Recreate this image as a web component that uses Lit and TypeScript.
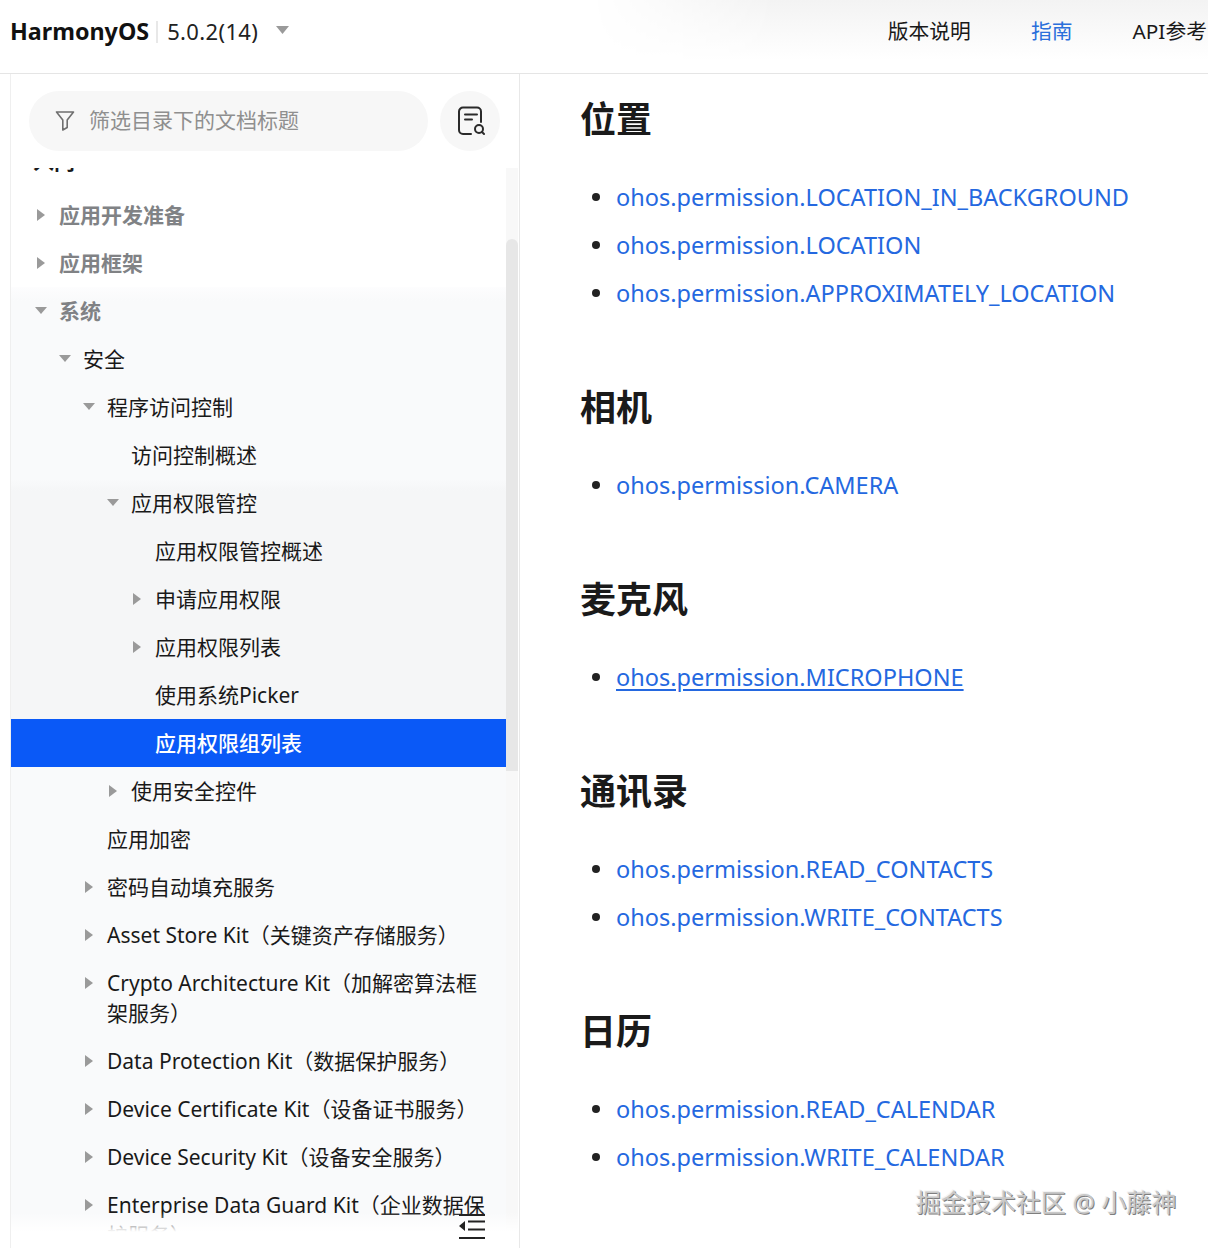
import { LitElement, html, css, svg } from "lit";
import { customElement } from "lit/decorators.js";

type Row = { t: string; l: number; a?: "r" | "d"; b?: boolean; sel?: boolean };

const top: Row[] = [
  { t: "应用开发准备", l: 0, a: "r", b: true },
  { t: "应用框架", l: 0, a: "r", b: true },
];
const g1a: Row[] = [
  { t: "系统", l: 0, a: "d", b: true },
  { t: "安全", l: 1, a: "d" },
  { t: "程序访问控制", l: 2, a: "d" },
  { t: "访问控制概述", l: 3 },
];
const g2: Row[] = [
  { t: "应用权限管控", l: 3, a: "d" },
  { t: "应用权限管控概述", l: 4 },
  { t: "申请应用权限", l: 4, a: "r" },
  { t: "应用权限列表", l: 4, a: "r" },
  { t: "使用系统Picker", l: 4 },
];
const sel: Row = { t: "应用权限组列表", l: 4, sel: true };
const g1b: Row[] = [
  { t: "使用安全控件", l: 3, a: "r" },
  { t: "应用加密", l: 2 },
  { t: "密码自动填充服务", l: 2, a: "r" },
  { t: "Asset Store Kit（关键资产存储服务）", l: 2, a: "r" },
  { t: "Crypto Architecture Kit（加解密算法框架服务）", l: 2, a: "r" },
  { t: "Data Protection Kit（数据保护服务）", l: 2, a: "r" },
  { t: "Device Certificate Kit（设备证书服务）", l: 2, a: "r" },
  { t: "Device Security Kit（设备安全服务）", l: 2, a: "r" },
  { t: "Enterprise Data Guard Kit（企业数据保护服务）", l: 2, a: "r" },
];

const sections: { h: string; items: string[]; u?: boolean }[] = [
  { h: "位置", items: ["ohos.permission.LOCATION_IN_BACKGROUND", "ohos.permission.LOCATION", "ohos.permission.APPROXIMATELY_LOCATION"] },
  { h: "相机", items: ["ohos.permission.CAMERA"] },
  { h: "麦克风", items: ["ohos.permission.MICROPHONE"], u: true },
  { h: "通讯录", items: ["ohos.permission.READ_CONTACTS", "ohos.permission.WRITE_CONTACTS"] },
  { h: "日历", items: ["ohos.permission.READ_CALENDAR", "ohos.permission.WRITE_CALENDAR"] },
];

const arrow = (a?: "r" | "d") =>
  a === "r"
    ? svg`<svg class="arr" width="24" height="14" viewBox="0 0 24 14"><polygon points="2,1 10,7 2,13" fill="#9a9a9a"/></svg>`
    : a === "d"
    ? svg`<svg class="arr" width="24" height="14" viewBox="0 0 24 14"><polygon points="0,3 12,3 6,10" fill="#9a9a9a"/></svg>`
    : html`<span class="arr-sp"></span>`;

@customElement("app-root")
export class AppRoot extends LitElement {
  static styles = css`
    :host {
      display: block;
      width: 1208px;
      height: 1248px;
      overflow: hidden;
      position: relative;
      background: #fff;
      color: #191919;
      font-family: "Noto Sans", "Noto Sans CJK SC", sans-serif;
    }
    header {
      border-bottom: 1px solid #e5e5e5;
      display: flex;
      align-items: center;
      padding: 0 1px 10px 10px;
      height: 63px;
      position: relative;
    }
    header::before {
      content: "";
      position: absolute;
      left: 590px;
      right: 0;
      top: 0;
      height: 60px;
      background: linear-gradient(to bottom, #f3f3f3, #fff);
      -webkit-mask-image: linear-gradient(to right, transparent, #000 30%);
      mask-image: linear-gradient(to right, transparent, #000 30%);
    }
    .logo {
      font-size: 23.3px;
      line-height: 28px;
      font-weight: 700;
      color: #111;
      padding: 0 7px 2px 0;
    }
    .sep {
      width: 2px;
      height: 22px;
      background: #e8e8e8;
      margin-right: 9px;
    }
    .ver {
      font-size: 22px;
      line-height: 28px;
      letter-spacing: 0.35px;
      color: #222;
      padding-bottom: 2px;
    }
    .caret {
      margin-left: 18px;
      margin-bottom: 2px;
    }
    nav {
      margin-left: auto;
      display: flex;
      gap: 60px;
      font-size: 20.8px;
      line-height: 24px;
      position: relative;
      white-space: nowrap;
      transform: translateY(-1px);
    }
    nav .on {
      color: #2a6fdb;
    }
    .body {
      display: flex;
      height: 1174px;
    }
    aside {
      margin-left: 10px;
      width: 508px;
      border-left: 1px solid #efefef;
      border-right: 1px solid #e8e8e8;
      display: flex;
      flex-direction: column;
      position: relative;
      overflow: hidden;
      flex: none;
    }
    .search {
      display: flex;
      gap: 12px;
      padding: 17px 0 0 18px;
      height: 77px;
      box-sizing: border-box;
      flex: none;
    }
    .pill {
      width: 399px;
      height: 60px;
      border-radius: 30px;
      background: #f7f7f7;
      display: flex;
      align-items: center;
      padding-left: 26px;
      gap: 14px;
      box-sizing: border-box;
      color: #8f8f8f;
      font-size: 21px;
      line-height: 28px;
    }
    .pill span {
      padding-bottom: 2px;
    }
    .round {
      width: 60px;
      height: 60px;
      border-radius: 50%;
      background: #f7f7f7;
      display: flex;
      align-items: center;
      justify-content: center;
    }
    .tree {
      flex: 1;
      display: flex;
      min-height: 0;
      padding-top: 17px;
    }
    .list {
      width: 495px;
      flex: none;
      overflow: hidden;
    }
    .clip {
      height: 5px;
      margin-bottom: 18px;
      overflow: hidden;
      display: flex;
      align-items: flex-end;
      padding-left: 22px;
      font-size: 21px;
      font-weight: 700;
      line-height: 23px;
    }
    .row {
      display: flex;
      align-items: flex-start;
      font-size: 21px;
      line-height: 30px;
      padding: 8.5px 20px 9.5px 0;
      box-sizing: border-box;
    }
    .row .txt {
      min-width: 0;
    }
    .row.b {
      font-weight: 700;
      color: #808285;
    }
    .row.sel {
      background: #0a59f7;
      color: #fff;
      font-weight: 500;
    }
    .arr,
    .arr-sp {
      flex: none;
      width: 24px;
      height: 14px;
      margin-top: 8px;
    }
    .g1 {
      background: linear-gradient(to bottom, #fdfdfe, #f9fafb 14px);
    }
    .g2 {
      background: linear-gradient(to bottom, #f9fafb, #f5f6f7 12px);
    }
    .scroll {
      flex: none;
      width: 12px;
      background: #f8f8f8;
    }
    .thumb {
      margin-top: 71px;
      height: 532px;
      background: #e7e7e7;
      border-radius: 6px 6px 0 0;
    }
    .fade {
      position: absolute;
      left: 0;
      right: 0;
      bottom: 0;
      height: 36px;
      background: linear-gradient(to bottom, rgba(255, 255, 255, 0), #fff 55%);
    }
    .fold {
      position: absolute;
      left: 448px;
      top: 1140px;
    }
    main {
      flex: 1;
      padding: 22px 0 0 60px;
      min-width: 0;
    }
    section {
      margin-bottom: 67px;
    }
    h2 {
      margin: 0 0 29px;
      font-size: 36px;
      line-height: 48px;
      font-weight: 700;
      color: #1a1a1a;
    }
    ul {
      margin: 0;
      padding: 0 0 0 36px;
      font-size: 23.5px;
      line-height: 48px;
      list-style: none;
    }
    li {
      position: relative;
      color: #2468e0;
    }
    li::before {
      content: "";
      position: absolute;
      left: -24px;
      top: 20px;
      width: 8px;
      height: 8px;
      border-radius: 50%;
      background: #222;
    }
    .u {
      text-decoration: underline;
      text-underline-offset: 3px;
    }
    .mark {
      position: absolute;
      left: 916px;
      top: 1185px;
      font-size: 25px;
      line-height: 34px;
      color: #c9c9c9;
      white-space: nowrap;
      text-shadow: 1px 1px 0 #7e7e7e, -1px -1px 0 #f4f4f4;
    }
  `;

  private rowTpl(r: Row) {
    return html`<div class="row ${r.b ? "b" : ""} ${r.sel ? "sel" : ""}" style="padding-left:${24 + r.l * 24}px">
      ${arrow(r.a)}<span class="txt">${r.t}</span>
    </div>`;
  }

  render() {
    return html`
      <header>
        <span class="logo">HarmonyOS</span><span class="sep"></span><span class="ver">5.0.2(14)</span>
        <svg class="caret" width="13" height="9" viewBox="0 0 13 9"><polygon points="0,0 13,0 6.5,8" fill="#9a9a9a"/></svg>
        <nav><span>版本说明</span><span class="on">指南</span><span>API参考</span></nav>
      </header>
      <div class="body">
        <aside>
          <div class="search">
            <div class="pill">
              <svg width="20" height="22" viewBox="0 0 20 22" fill="none" stroke="#6f6f6f" stroke-width="1.6" stroke-linejoin="round">
                <path d="M1.5 2h17l-6.3 8v7.5l-4.4 2.5V10z"/>
              </svg>
              <span>筛选目录下的文档标题</span>
            </div>
            <div class="round">
              <svg width="30" height="30" viewBox="0 0 30 30" fill="none" stroke="#2a2a2a" stroke-width="2" stroke-linecap="round">
                <path d="M16 28H8a4 4 0 0 1-4-4V5.5a4 4 0 0 1 4-4h14a4 4 0 0 1 4 4V16"/>
                <path d="M10 8.5h12M10 13.5h7"/>
                <circle cx="24" cy="23" r="4"/>
                <path d="M27 26l2 2"/>
              </svg>
            </div>
          </div>
          <div class="tree">
            <div class="list">
              <div class="clip"><span>入门</span></div>
              ${top.map((r) => this.rowTpl(r))}
              <div class="g1">
                ${g1a.map((r) => this.rowTpl(r))}
                <div class="g2">${g2.map((r) => this.rowTpl(r))}</div>
                ${this.rowTpl(sel)}
                ${g1b.map((r) => this.rowTpl(r))}
              </div>
            </div>
            <div class="scroll"><div class="thumb"></div></div>
          </div>
          <div class="fade"></div>
          <svg class="fold" width="26" height="25" viewBox="0 0 26 25" fill="none" stroke="#222" stroke-width="2">
            <path d="M0 1h26M9 7.5h17M9 15.5h17M0 24h26"/>
            <polygon points="0,12 6,7 6,17" fill="#222" stroke="none"/>
          </svg>
        </aside>
        <main>
          ${sections.map(
            (s) => html`<section>
              <h2>${s.h}</h2>
              <ul>
                ${s.items.map((i) => html`<li class="${s.u ? "u" : ""}">${i}</li>`)}
              </ul>
            </section>`
          )}
        </main>
      </div>
      <div class="mark">掘金技术社区 @ 小藤神</div>
    `;
  }
}
